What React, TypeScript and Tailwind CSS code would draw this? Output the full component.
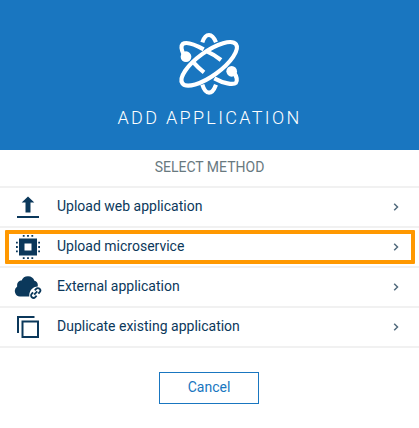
import React from 'react';

function AtomIcon() {
  return (
    <svg className="h-20 w-20" viewBox="0 0 240 240" fill="none" stroke="#fff" strokeWidth="12.5">
      <ellipse cx="117.5" cy="119.5" rx="99.5" ry="36" transform="rotate(-36 117.5 119.5)" />
      <path d="M97 55C102 40 110 33 117 33C125 33 132 40 138 55" />
      <path d="M97 182C102 198 110 206 117 206C125 206 132 198 138 182" />
      <path d="M41 92C34 77 32 66 38 60C49 52 74 61 101 76" />
      <path d="M112 83Q133 92 153 108" />
      <path d="M71 116Q84 131 102 145" />
      <path d="M133 163C160 178 190 184 198 176C203 170 200 157 193 147" />
      <circle cx="48" cy="98" r="16" fill="#fff" stroke="none" />
      <circle cx="185" cy="142" r="16" fill="#fff" stroke="none" />
    </svg>
  );
}

function UploadIcon() {
  return (
    <svg className="h-6 w-6" viewBox="0 0 24 24" fill="#0b385b">
      <path d="M12 1.5l6.3 6H14.5V17.5h-5V7.5H5.7zM1 21h22v2H1z" />
    </svg>
  );
}

function ChipIcon() {
  return (
    <svg className="h-6 w-6" viewBox="0 0 24 24" fill="#0b385b">
      <path fillRule="evenodd" d="M3 3.5h18v17H3zM8.5 8.5v7h7v-7z" />
      <path d="M6.8 0h1.8v1.8H6.8zM11.1 0h1.8v1.8h-1.8zM15.4 0h1.8v1.8h-1.8zM6.8 22.2h1.8V24H6.8zM11.1 22.2h1.8V24h-1.8zM15.4 22.2h1.8V24h-1.8zM0 6.8h1.8v1.8H0zM0 11.1h1.8v1.8H0zM0 15.4h1.8v1.8H0zM22.2 6.8H24v1.8h-1.8zM22.2 11.1H24v1.8h-1.8zM22.2 15.4H24v1.8h-1.8z" />
    </svg>
  );
}

function CloudLinkIcon() {
  return (
    <svg className="h-6 w-7" viewBox="0 0 28 24">
      <path
        fill="#0b385b"
        d="M6 21.5a5.5 5.5 0 0 1-2.8-10C2.6 8 5 5.6 7.6 5.6A6.8 6.8 0 0 1 20.4 5.8c2.6.5 4 3 3.2 5.8-4 .2-6.3 2.7-7.6 5.1-.7 1.5-.8 3-.7 4.8z"
      />
      <g fill="none" stroke="#0b385b" strokeWidth="1.8" transform="rotate(-48 21.7 18)">
        <path d="M20.4 15.6h-2a2.4 2.4 0 0 0 0 4.8h2M23 15.6h2a2.4 2.4 0 0 1 0 4.8h-2M19.4 18H24" />
      </g>
    </svg>
  );
}

function CopyIcon() {
  return (
    <svg className="h-6 w-6" viewBox="0 0 24 24" fill="none" stroke="#0b385b" strokeWidth="2">
      <path d="M2 18V2h16.5" />
      <path d="M6.5 6.5h15.5v15.5H6.5z" />
    </svg>
  );
}

const methods = [
  { label: 'Upload web application', icon: <UploadIcon /> },
  { label: 'Upload microservice', icon: <ChipIcon />, highlighted: true },
  { label: 'External application', icon: <CloudLinkIcon /> },
  { label: 'Duplicate existing application', icon: <CopyIcon /> },
];

export default function App() {
  return (
    <div className="h-[428px] w-[419px] overflow-hidden rounded-b-[3px] bg-white font-['Roboto',sans-serif] text-sm">
      <header className="flex h-[150px] flex-col items-center bg-[#1976c0] pt-6">
        <div className="pl-px">
          <AtomIcon />
        </div>
        <h1 className="text-[18px] leading-[27px] font-light tracking-[2.32px] text-white">ADD APPLICATION</h1>
      </header>
      <div className="flex h-9 items-center justify-center pb-0.5 text-[#68797f]">SELECT METHOD</div>
      <ul className="border-b-2 border-[#f1f1f1]">
        {methods.map((m) => (
          <li key={m.label} className="relative flex h-10 items-center border-t-2 border-[#f1f1f1] text-[#0b385b]">
            <span className="ml-3.5 flex w-7 justify-center">{m.icon}</span>
            <span className="ml-[15px] grow pb-0.5">{m.label}</span>
            <svg className="mr-[19px] h-2 w-2" viewBox="0 0 8 8" fill="none" stroke="#526b7d" strokeWidth="1.5">
              <path d="M2.2 .8L5.5 4 2.2 7.2" />
            </svg>
            {m.highlighted && (
              <span className="absolute top-0.5 left-[5px] h-[34px] w-[410px] rounded-[1px] border-4 border-[#ff9800]" />
            )}
          </li>
        ))}
      </ul>
      <div className="flex justify-center pr-px pt-6">
        <button className="h-8 w-[100px] border border-[#1976c0] pb-0.5 text-[#1976c0]">Cancel</button>
      </div>
    </div>
  );
}
